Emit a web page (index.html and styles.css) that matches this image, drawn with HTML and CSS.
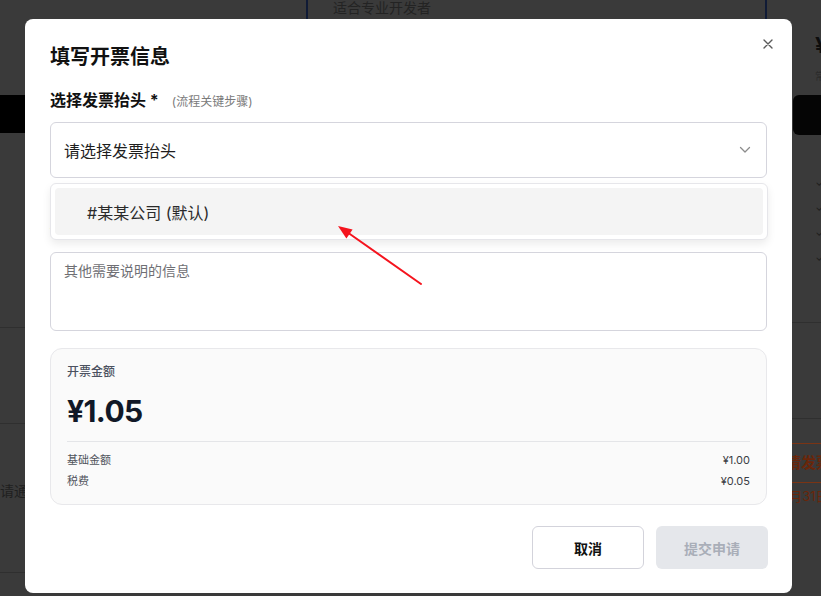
FILE: index.html
```html
<!DOCTYPE html>
<html lang="zh-CN">
<head>
<meta charset="utf-8">
<title>填写开票信息</title>
<link rel="stylesheet" href="styles.css">
</head>
<body>
<div class="backdrop">
  <div class="bg-left">
    <div class="bg-blackbar"></div>
    <div class="bg-line bg-line-1"></div>
    <div class="bg-line bg-line-2"></div>
    <div class="bg-left-text">请通过</div>
    <div class="bg-line bg-line-3"></div>
  </div>
  <div class="bg-center">
    <div class="bg-card">适合专业开发者</div>
  </div>
  <div class="bg-right">
    <div class="bg-price">¥</div>
    <div class="bg-small">常</div>
    <div class="bg-btn"></div>
    <div class="bg-checks">
      <span>✓</span><span>✓</span><span>✓</span><span>✓</span>
    </div>
    <div class="bg-line bg-rline-1"></div>
    <div class="bg-line bg-rline-2"></div>
    <div class="bg-orange-line bg-oline-1"></div>
    <div class="bg-orange-text">申请发票</div>
    <div class="bg-orange-line bg-oline-2"></div>
    <div class="bg-date">12月31日</div>
  </div>
</div>

<div class="overlay">
  <div class="modal">
    <button class="close" aria-label="关闭">
      <svg width="10" height="10" viewBox="0 0 10 10"><path d="M1 1 L9 9 M9 1 L1 9" stroke="#5a5a5a" stroke-width="1.4" fill="none" stroke-linecap="round"/></svg>
    </button>
    <h2 class="title">填写开票信息</h2>

    <div class="label-row">
      <span class="label">选择发票抬头 *</span>
      <span class="hint">(流程关键步骤)</span>
    </div>

    <div class="select-wrap">
      <div class="select">
        <span>请选择发票抬头</span>
        <svg class="chev" width="12" height="8" viewBox="0 0 12 8"><path d="M1.5 1.5 L6 6 L10.5 1.5" stroke="#8c8c8c" stroke-width="1.3" fill="none" stroke-linecap="round" stroke-linejoin="round"/></svg>
      </div>
      <div class="menu">
        <div class="option">#某某公司 (默认)</div>
      </div>
    </div>

    <div class="note-label">备注说明</div>
    <textarea class="note" placeholder="其他需要说明的信息"></textarea>

    <div class="amount-card">
      <div class="amount-label">开票金额</div>
      <div class="amount">¥1.05</div>
      <div class="rows">
        <div class="row"><span>基础金额</span><span class="val">¥1.00</span></div>
        <div class="row"><span>税费</span><span class="val">¥0.05</span></div>
      </div>
    </div>

    <div class="actions">
      <button class="btn btn-cancel">取消</button>
      <button class="btn btn-submit" disabled>提交申请</button>
    </div>
  </div>
</div>

<svg class="arrow" width="821" height="596" viewBox="0 0 821 596">
  <path d="M421 284 L347 232" stroke="#f5141e" stroke-width="2" fill="none" stroke-linecap="round"/>
  <polygon points="338,226 352.6,229.6 346.4,238.4" fill="#f5141e"/>
</svg>
</body>
</html>
```

FILE: styles.css
```css
* { box-sizing: border-box; }

html, body {
  margin: 0;
  width: 821px;
  height: 596px;
  overflow: hidden;
}

body {
  position: relative;
  background: #3a3a3a;
  font-family: Inter, "Noto Sans CJK SC", "Noto Sans", sans-serif;
  color: #111;
}

/* ---------- dimmed page underneath ---------- */
.backdrop {
  position: absolute;
  inset: 0;
  display: grid;
  grid-template-columns: 25px 1fr 41px;
}

.bg-left {
  display: flex;
  flex-direction: column;
}

.bg-blackbar {
  margin-top: 95px;
  height: 38px;
  background: #000;
}

.bg-line {
  height: 1px;
  background: #2f2f2f;
}

.bg-line-1 { margin-top: 194px; }
.bg-line-2 { margin-top: 95px; }
.bg-line-3 { margin-top: 72px; }

.bg-left-text {
  margin-top: 58px;
  font-size: 14px;
  line-height: 18px;
  color: #1f1f1f;
  white-space: nowrap;
}

.bg-center {
  overflow: hidden;
}

.bg-card {
  margin-left: 281px;
  width: 461px;
  height: 40px;
  border-left: 2px solid #101b36;
  border-right: 2px solid #101b36;
  padding-left: 25px;
  font-size: 14px;
  line-height: 16px;
  color: #232323;
}

.bg-right {
  display: flex;
  flex-direction: column;
  padding-left: 13px;
  overflow: hidden;
}

.bg-price {
  margin-top: 32px;
  margin-left: 22px;
  font-size: 22px;
  line-height: 26px;
  font-weight: 700;
  color: #0d0d0d;
}

.bg-small {
  margin-top: 12px;
  margin-left: 22px;
  font-size: 10px;
  line-height: 12px;
  color: #2a2a2a;
}

.bg-btn {
  margin-top: 13px;
  height: 40px;
  margin-right: -10px;
  background: #050505;
  border-radius: 6px;
}

.bg-checks {
  margin-top: 40px;
  display: flex;
  flex-direction: column;
  gap: 9px;
  margin-left: 22px;
  font-size: 12px;
  line-height: 16px;
  color: #1f1f1f;
}

.bg-right .bg-line { margin-left: -13px; }
.bg-rline-1 { margin-top: 56px; }
.bg-rline-2 { margin-top: 95px; }

.bg-orange-line {
  height: 1px;
  margin-left: -13px;
  background: #7a3414;
}

.bg-oline-1 { margin-top: 24px; }
.bg-oline-2 { margin-top: 0; }

.bg-orange-text {
  margin-left: -22px;
  height: 38px;
  font-size: 15px;
  line-height: 38px;
  font-weight: 700;
  color: #6a260a;
  white-space: nowrap;
}

.bg-date {
  margin-left: -17px;
  margin-top: 6px;
  font-size: 13px;
  line-height: 14px;
  color: #6a260a;
  white-space: nowrap;
}

/* ---------- modal ---------- */
.overlay {
  position: absolute;
  inset: 0;
  padding: 19px 29px 3px 25px;
}

.modal {
  position: relative;
  height: 574px;
  background: #fff;
  border-radius: 8px;
  padding: 24px 25px 24px 25px;
}

.close {
  position: absolute;
  top: 20px;
  right: 19px;
  width: 10px;
  height: 10px;
  padding: 0;
  border: 0;
  background: none;
  display: flex;
}

.title {
  margin: 0;
  font-size: 20px;
  line-height: 28px;
  font-weight: 700;
  color: #111;
}

.label-row {
  margin-top: 18px;
  display: flex;
  align-items: baseline;
  height: 22px;
}

.label {
  font-size: 16px;
  line-height: 22px;
  font-weight: 700;
  color: #111;
}

.hint {
  margin-left: 13px;
  font-size: 12px;
  line-height: 22px;
  color: #7a7a7a;
}

.select-wrap {
  position: relative;
  margin-top: 11px;
}

.select {
  height: 56px;
  border: 1px solid #d5d5dd;
  border-radius: 6px;
  padding: 0 15px 0 13px;
  display: flex;
  align-items: center;
  justify-content: space-between;
  font-size: 16px;
  color: #1e1e1e;
}

.menu {
  position: absolute;
  top: 61px;
  left: 0;
  right: -1px;
  height: 57px;
  background: #fff;
  border: 1px solid #e6e6ea;
  border-radius: 6px;
  box-shadow: 0 4px 8px rgba(0, 0, 0, 0.08);
  padding: 4px;
  z-index: 2;
}

.option {
  height: 47px;
  background: #f4f4f4;
  border-radius: 4px;
  padding-left: 32px;
  display: flex;
  align-items: center;
  font-size: 16px;
  color: #2a2a2a;
}

.note-label {
  margin-top: 40px;
  margin-bottom: 12px;
  font-size: 14px;
  line-height: 22px;
  font-weight: 600;
}

.note {
  display: block;
  width: 100%;
  height: 79px;
  margin: 0;
  border: 1px solid #d5d5dd;
  border-radius: 6px;
  padding: 8px 13px;
  font-family: inherit;
  font-size: 14px;
  line-height: 20px;
  resize: none;
  color: #1e1e1e;
  background: #fff;
}

.note::placeholder {
  color: #6f6f74;
}

.amount-card {
  margin-top: 17px;
  height: 157px;
  background: #fafafa;
  border: 1px solid #e8e8eb;
  border-radius: 12px;
  padding: 14px 16px 0 16px;
}

.amount-label {
  font-size: 12px;
  line-height: 18px;
  font-weight: 500;
  color: #4b5160;
}

.amount {
  margin-top: 12px;
  font-size: 30px;
  line-height: 36px;
  font-weight: 700;
  letter-spacing: -0.6px;
  color: #111827;
}

.rows {
  margin-top: 12px;
  border-top: 1px solid #e4e5e8;
  padding-top: 10px;
  display: flex;
  flex-direction: column;
  gap: 5px;
}

.row {
  display: flex;
  justify-content: space-between;
  font-size: 11px;
  line-height: 16px;
  color: #50545c;
}

.row .val {
  color: #3a3d44;
}

.actions {
  margin-top: 21px;
  display: flex;
  justify-content: flex-end;
  gap: 12px;
  margin-right: -1px;
}

.btn {
  width: 112px;
  height: 43px;
  border-radius: 6px;
  font-family: inherit;
  font-size: 14px;
  font-weight: 600;
  padding: 0;
}

.btn-cancel {
  background: #fff;
  border: 1px solid #d3d3db;
  color: #111;
}

.btn-submit {
  background: #e5e7eb;
  border: 0;
  color: #a9aeb8;
}

/* ---------- annotation arrow ---------- */
.arrow {
  position: absolute;
  left: 0;
  top: 0;
  z-index: 10;
  pointer-events: none;
}
```
